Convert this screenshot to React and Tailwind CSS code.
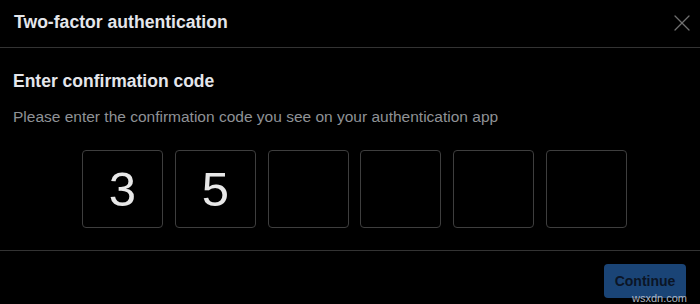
import { X } from 'lucide-react';

const digits = ['3', '5', '', '', '', ''];

const CodeBox = ({ value }) => (
    <div className="w-[81px] h-[78px] rounded-[4px] border border-[#3e3e3e] flex items-center justify-center text-[49px] leading-none text-[#e8e8e8]">
        {value}
    </div>
);

export default function App() {
    return (
        <div
            className="w-[700px] h-[304px] bg-black flex flex-col overflow-hidden"
            style={{ fontFamily: '"Liberation Sans", Arial, sans-serif' }}
        >
            <div className="h-[48px] flex items-center justify-between pl-[14px] pr-[4px] border-b border-[#333]">
                <h1 className="text-[17.6px] font-bold text-[#e4e6eb] pb-[2px]">
                    Two-factor authentication
                </h1>
                <X className="w-[28px] h-[28px] text-[#6f6f6f] mb-[2px]" strokeWidth={1.1} />
            </div>

            <div className="px-[13px] pt-[22px]">
                <h2 className="text-[17.5px] font-bold text-[#e4e6eb] leading-[22px]">
                    Enter confirmation code
                </h2>
                <p className="mt-[14px] text-[15.5px] text-[#8f9296] leading-[22px]">
                    Please enter the confirmation code you see on your authentication app
                </p>
            </div>

            <div className="flex gap-[11.8px] ml-[82px] mt-[22px]">
                {digits.map((d, i) => (
                    <CodeBox key={i} value={d} />
                ))}
            </div>

            <div className="mt-[22px] border-t border-[#333] flex justify-end pr-[14px] pt-[13px] relative flex-1">
                <button className="w-[82px] h-[34px] rounded-[4px] bg-[#1a4476] text-[#0b1526] text-[14px] font-bold">
                    Continue
                </button>
                <span className="absolute right-[13px] bottom-[0px] text-[11px] text-[#aeb6c2] leading-none">
                    wsxdn.com
                </span>
            </div>
        </div>
    );
}
